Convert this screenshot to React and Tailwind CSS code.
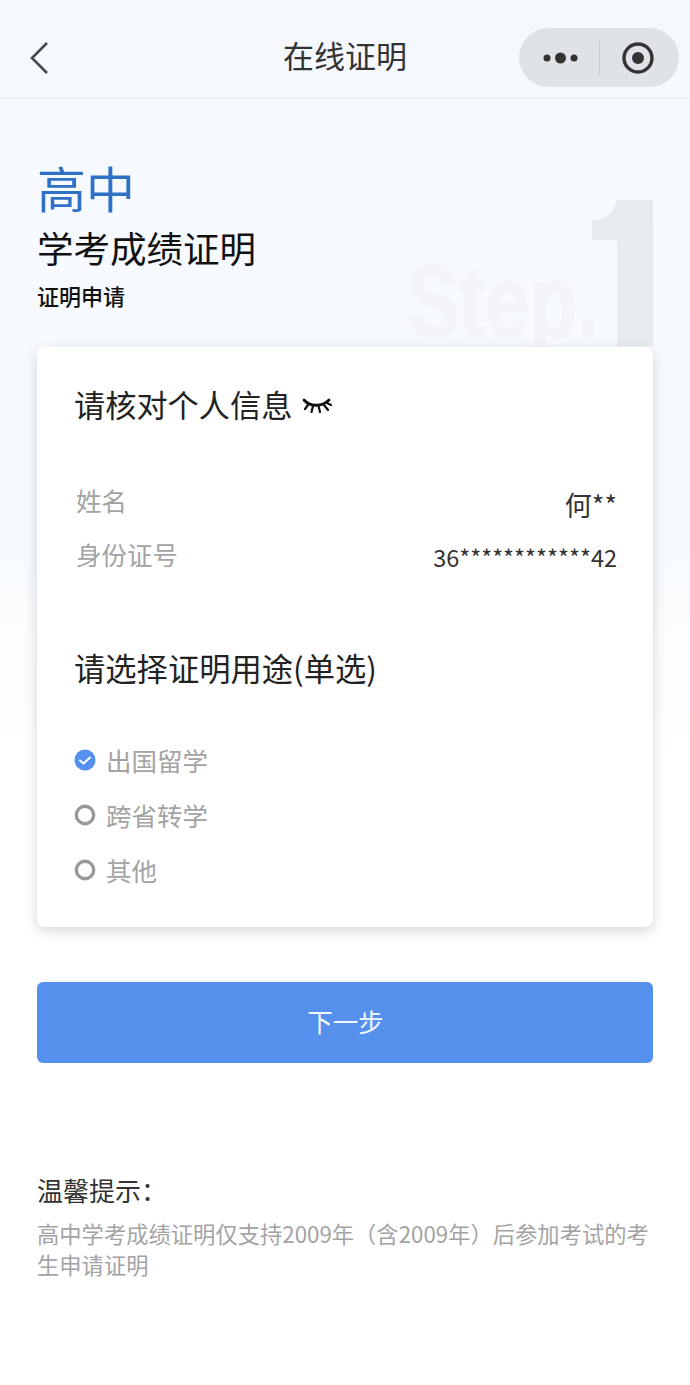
const cjk = { fontFamily: '"Noto Sans CJK SC", "Noto Sans", sans-serif' };

function Check({ on }) {
  if (on) {
    return (
      <svg width="22" height="22" viewBox="0 0 22 22" className="shrink-0">
        <circle cx="11" cy="11" r="10.5" fill="#5590ec" />
        <path d="M6 11.5 L9.6 14.5 L16 8.5" fill="none" stroke="#fff" strokeWidth="2" strokeLinecap="round" strokeLinejoin="round" />
      </svg>
    );
  }
  return (
    <svg width="22" height="22" viewBox="0 0 22 22" className="shrink-0">
      <circle cx="11" cy="11" r="8.7" fill="none" stroke="#999999" strokeWidth="3.4" />
    </svg>
  );
}

function Option({ on, label }) {
  return (
    <div className="flex items-center gap-[10px] h-[55px]">
      <Check on={on} />
      <span className="text-[25.5px] text-[#a3a3a3] leading-none">{label}</span>
    </div>
  );
}

export default function App() {
  return (
    <div style={cjk} className="relative w-[690px] h-[1385px] overflow-hidden bg-gradient-to-b from-[#f5f9fe] via-[#f8fbfe] via-40% to-[#ffffff] to-55%">
      <header className="relative flex items-center justify-center h-[99px] pt-[10px] border-b border-[#e8edf2]">
        <svg width="22" height="34" viewBox="0 0 22 34" className="absolute left-[28px] top-[41px]">
          <path d="M19 2 L4 17 L19 32" fill="none" stroke="#44484b" strokeWidth="2.6" />
        </svg>
        <span className="text-[31px] text-[#333333] leading-none">在线证明</span>
        <div className="absolute left-[519px] top-[28px] w-[160px] h-[59px] rounded-full bg-[#dfe2e6] flex items-center">
          <svg width="36" height="14" viewBox="0 0 36 14" className="ml-[24px]">
            <circle cx="4" cy="7" r="3.5" fill="#333" />
            <circle cx="17.5" cy="7" r="5.5" fill="#333" />
            <circle cx="31" cy="7" r="3.5" fill="#333" />
          </svg>
          <div className="ml-[20px] w-px h-[34px] bg-[#c8cbcf]" />
          <svg width="32" height="32" viewBox="0 0 32 32" className="ml-[22px]">
            <circle cx="16" cy="16" r="14" fill="none" stroke="#333" strokeWidth="3.4" />
            <circle cx="16" cy="16" r="6" fill="#333" />
          </svg>
        </div>
      </header>

      <span
        className="absolute left-[407px] top-[249px] text-[104px] font-bold leading-none text-[#f3f5f8] origin-left scale-x-[0.755] select-none whitespace-nowrap [-webkit-text-stroke:2px_#f3f5f8]"
        style={{ fontFamily: '"Liberation Sans", sans-serif' }}
      >
        Step.
      </span>
      <svg width="62" height="147" viewBox="0 0 62 147" className="absolute left-[592px] top-[199px]">
        <path d="M25 1 H61 V147 H25 V41 H0 V22 C14 21 22 13 25 1 Z" fill="#e8ebee" />
      </svg>

      <main className="relative px-[37px]">
        <div className="pt-[54px] h-[248px]">
          <div className="text-[49px] leading-[68px] text-[#2f71c6]">高中</div>
          <div className="text-[36.5px] leading-[54px] text-[#111111]">学考成绩证明</div>
          <div className="text-[22px] leading-[30px] text-[#111111] mt-[5px] font-medium">证明申请</div>
        </div>

        <section className="h-[580px] rounded-[8px] bg-white shadow-[0_4px_14px_rgba(0,0,0,0.16)] pl-[38px] pr-[36px] pt-[34px]">
          <div className="flex items-center h-[46px] ml-[-1px]">
            <span className="text-[31.2px] text-[#222222] leading-none">请核对个人信息</span>
            <svg width="30" height="20" viewBox="0 0 30 20" className="ml-[10px] mt-[3px]">
              <path d="M2 4 C8 11 20 11 27 4" fill="none" stroke="#111" strokeWidth="2.8" strokeLinecap="round" />
              <path d="M6 9 L3 13 M11 10 L9.5 16 M16.5 10 L18 16 M22 9 L26 14 M25 7 L29 9" fill="none" stroke="#111" strokeWidth="2.2" strokeLinecap="round" />
            </svg>
          </div>
          <div className="mt-[54px] flex items-start justify-between h-[54px]">
            <span className="text-[25.5px] leading-[36px] text-[#a3a3a3] mt-[1px] ml-[1px]">姓名</span>
            <span className="text-[27px] leading-[36px] text-[#333333] mt-[6px]">何**</span>
          </div>
          <div className="flex items-start justify-between h-[54px]">
            <span className="text-[25.5px] leading-[36px] text-[#a3a3a3] mt-[1px] ml-[1px]">身份证号</span>
            <span className="text-[23.5px] leading-[36px] text-[#333333] mt-[4px]">36************42</span>
          </div>
          <div className="mt-[56px] ml-[-1px] text-[31.3px] leading-[46px] text-[#222222]">请选择证明用途(单选)</div>
          <div className="mt-[41px] ml-[-1px]">
            <Option on label="出国留学" />
            <Option label="跨省转学" />
            <Option label="其他" />
          </div>
        </section>

        <button className="block w-full h-[81px] mt-[55px] pb-[3px] pl-[1px] rounded-[6px] bg-[#5590ec] text-[25.5px] text-[#f4f8ff]">下一步</button>

        <div className="mt-[109px] text-[26px] leading-[36px] text-[#333333]">温馨提示：</div>
        <p className="mt-[10px] text-[22.3px] leading-[31px] text-[#a3a3a3] w-[620px]">高中学考成绩证明仅支持2009年（含2009年）后参加考试的考生申请证明</p>
      </main>
    </div>
  );
}
